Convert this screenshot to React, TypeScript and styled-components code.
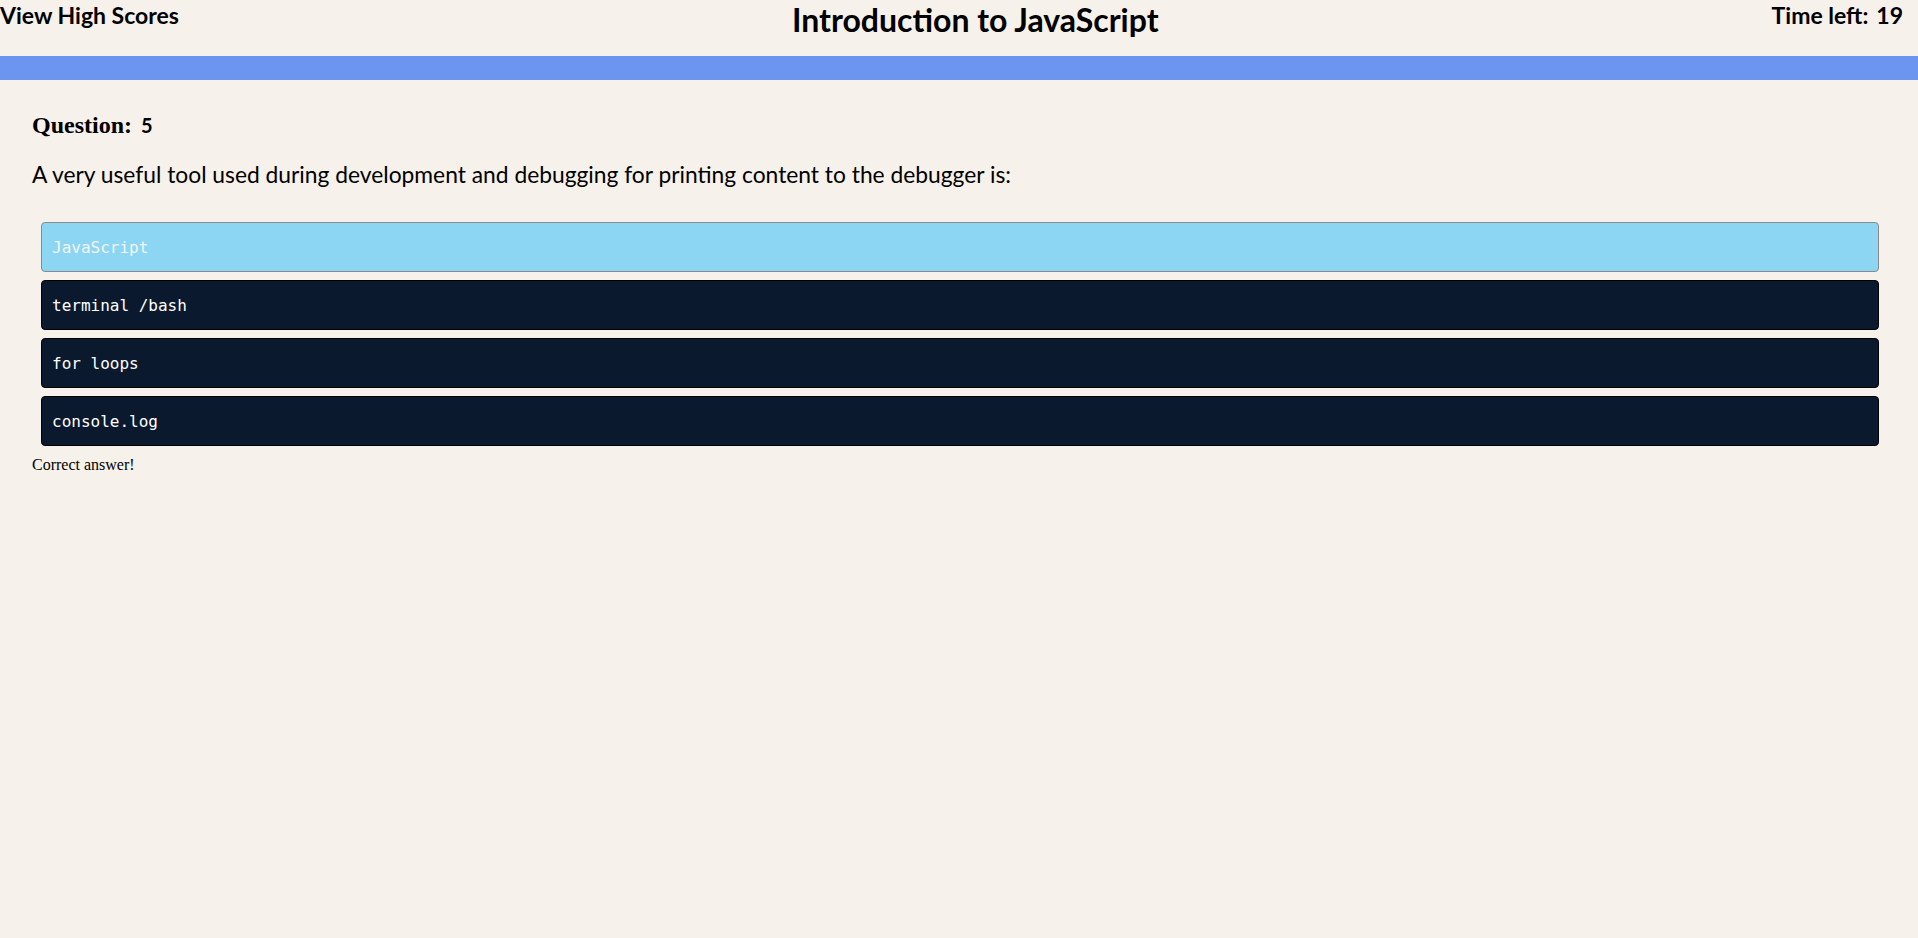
import React from 'react';
import styled, { createGlobalStyle } from 'styled-components';

const GlobalStyle = createGlobalStyle`
  body {
    margin: 0;
    background-color: #f6f1ea;
    font-family: 'Liberation Serif', 'Times New Roman', serif;
    color: #000;
  }
`;

const Header = styled.header`
  display: flex;
  justify-content: space-between;
  align-items: flex-start;
  height: 56px;
  padding-right: 15px;
  font-family: Lato, 'Noto Sans', sans-serif;
`;

const HeaderText = styled.div`
  font-size: 23px;
  font-weight: 700;
  line-height: 30px;
`;

const Timer = styled.span`
  margin-left: 8px;
`;

const Title = styled.h1`
  margin: 0;
  font-size: 32px;
  font-weight: 700;
  line-height: 40px;
`;

const Bar = styled.div`
  height: 24px;
  background-color: #6b95ee;
`;

const Main = styled.main`
  padding: 31px 29px 0 32px;
`;

const QuestionHeading = styled.h2`
  margin: 0 0 22px;
  font-size: 24px;
  font-weight: 700;
  line-height: 28px;
`;

const QuestionNumber = styled.span`
  margin-left: 3px;
  font-family: Lato, 'Noto Sans', sans-serif;
  font-size: 20px;
`;

const QuestionText = styled.p`
  margin: 0 0 35px;
  font-family: Lato, 'Noto Sans', sans-serif;
  font-size: 22.8px;
  line-height: 26px;
`;

const AnswerList = styled.div`
  display: flex;
  flex-direction: column;
  gap: 8px;
  margin: 0 10px 0 9px;
`;

const AnswerButton = styled.button<{ $selected?: boolean }>`
  display: flex;
  align-items: center;
  height: 50px;
  padding: 0 10px;
  border-radius: 4px;
  border: 1px solid ${(p) => (p.$selected ? '#8a8a8a' : '#000')};
  background-color: ${(p) => (p.$selected ? '#8cd6f4' : '#0a192e')};
  color: ${(p) => (p.$selected ? '#f2f6f4' : '#fff')};
  font-family: 'DejaVu Sans Mono', 'Liberation Mono', monospace;
  font-size: 16px;
  text-align: left;
  cursor: pointer;
`;

const Feedback = styled.p`
  margin: 10px 0 0;
  font-size: 16px;
`;

const answers = ['JavaScript', 'terminal /bash', 'for loops', 'console.log'];

const App: React.FC = () => {
  return (
    <>
      <GlobalStyle />
      <Header>
        <HeaderText>View High Scores</HeaderText>
        <Title>Introduction to JavaScript</Title>
        <HeaderText>
          Time left:<Timer>19</Timer>
        </HeaderText>
      </Header>
      <Bar />
      <Main>
        <QuestionHeading>
          Question: <QuestionNumber>5</QuestionNumber>
        </QuestionHeading>
        <QuestionText>
          A very useful tool used during development and debugging for printing content to the debugger is:
        </QuestionText>
        <AnswerList>
          {answers.map((a, i) => (
            <AnswerButton key={a} $selected={i === 0}>
              {a}
            </AnswerButton>
          ))}
        </AnswerList>
        <Feedback>Correct answer!</Feedback>
      </Main>
    </>
  );
};

export default App;
